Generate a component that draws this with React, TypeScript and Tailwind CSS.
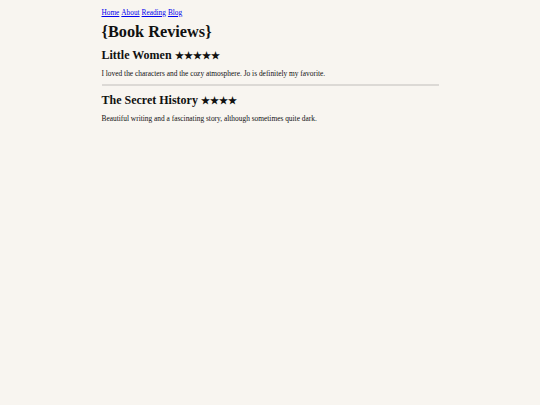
export default function App() {
  const reviews = [
    { title: 'Little Women', stars: '★★★★★', text: 'I loved the characters and the cozy atmosphere. Jo is definitely my favorite.' },
    { title: 'The Secret History', stars: '★★★★', text: 'Beautiful writing and a fascinating story, although sometimes quite dark.' },
  ];

  return (
    <div className="min-h-[405px] bg-[#f8f5f0] text-[#111] font-['Liberation_Serif',serif]">
      <div className="mx-auto w-[337px] pt-[8px]">
        <nav className="flex gap-[2px] text-[7.3px] leading-[10px]">
          {['Home', 'About', 'Reading', 'Blog'].map((l) => (
            <a key={l} href="#" className="text-[#0000ee] underline">{l}</a>
          ))}
        </nav>
        <h1 className="mt-[4px] text-[16.3px] font-bold leading-[20px]">{'{Book Reviews}'}</h1>
        {reviews.map((r, i) => (
          <div key={r.title}>
            {i > 0 && <hr className="border-t-2 border-[#dcd9d5] mt-[5px]" />}
            <h2 className={`${i > 0 ? 'mt-[7px]' : 'mt-[6px]'} text-[12px] font-bold leading-[14px]`}>
              {r.title} <span className="text-[9.8px]">{r.stars}</span>
            </h2>
            <p className="mt-[6px] text-[7.4px] leading-[10px]">{r.text}</p>
          </div>
        ))}
      </div>
    </div>
  );
}
